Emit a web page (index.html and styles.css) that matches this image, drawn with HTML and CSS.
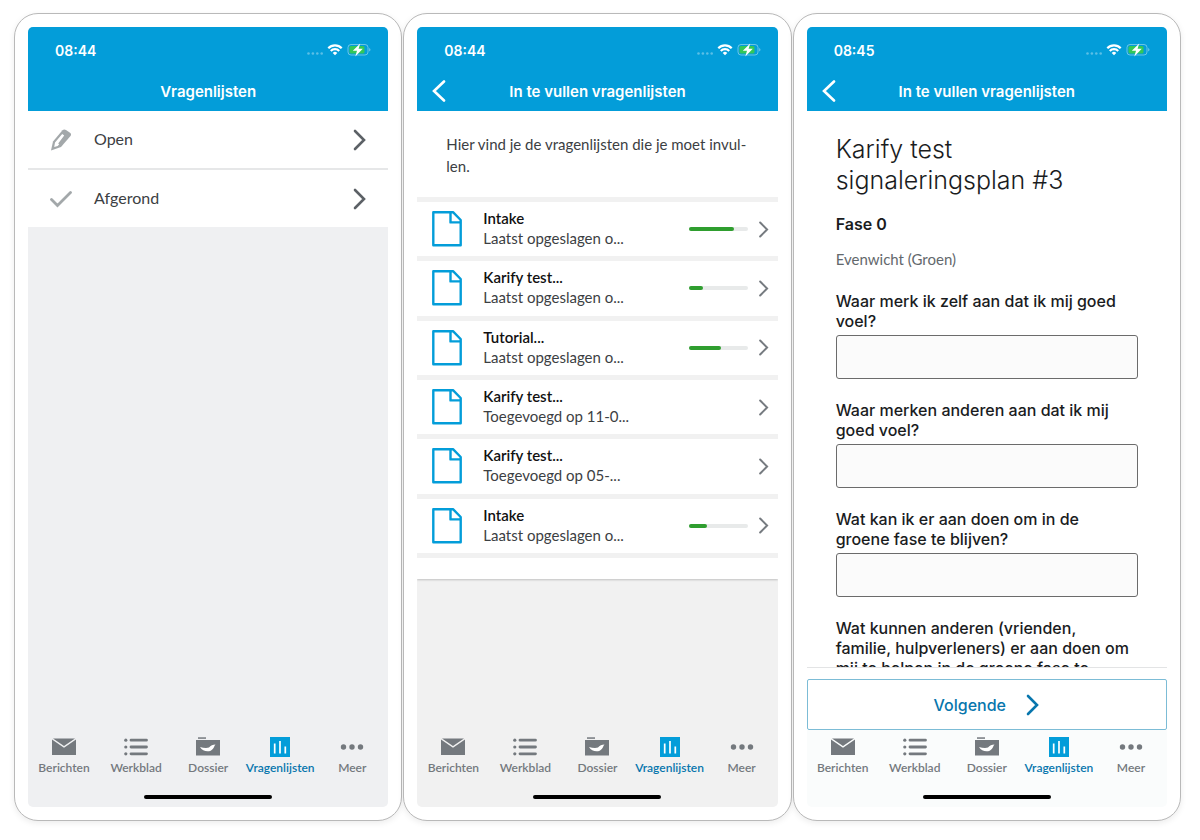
FILE: index.html
```html
<!DOCTYPE html>
<html lang="nl">
<head>
    <meta charset="utf-8">
    <title>Vragenlijsten</title>
    <link rel="stylesheet" href="styles.css">
</head>
<body>
    <!-- Shared icons -->
    <svg class="sprite" aria-hidden="true">
        <symbol id="status" viewBox="0 0 66 14">
            <g fill="#fff" opacity=".35">
                <circle cx="2.5" cy="10.5" r="1.3"/><circle cx="6.9" cy="10.5" r="1.3"/><circle cx="11.3" cy="10.5" r="1.3"/><circle cx="15.7" cy="10.5" r="1.3"/>
            </g>
            <g fill="none" stroke="#fff" stroke-width="2.2">
                <path d="M22.3 5.2a9.3 9.3 0 0 1 13.4 0"/>
                <path d="M24.8 8a5.8 5.8 0 0 1 8.4 0"/>
            </g>
            <path fill="#fff" d="M26.7 9.9a3.4 3.4 0 0 1 4.6 0L29 12.3z"/>
            <rect x="42" y="1.5" width="20" height="10.5" rx="3" fill="none" stroke="#fff" opacity=".4"/>
            <path d="M63.3 5v3.6a2 2 0 0 0 0-3.6z" fill="#fff" opacity=".5"/>
            <rect x="43.5" y="3" width="15" height="7.5" rx="1.6" fill="#34c759"/>
            <path d="M54.2.5 46.800 7.800h4.200l-1.700 5.700 7.500-7.700h-4.200z" fill="#fff"/>
        </symbol>
        <symbol id="next" viewBox="0 0 14 22">
            <path d="M2 2l9 9-9 9" fill="none" stroke="currentColor" stroke-width="2.6" stroke-linecap="round"/>
        </symbol>
        <symbol id="back" viewBox="0 0 14 22">
            <path d="M12 1.5 2 11l10 9.5" fill="none" stroke="currentColor" stroke-width="2.6" stroke-linecap="round"/>
        </symbol>
        <symbol id="doc" viewBox="0 0 30 36">
            <path d="M1.3 1.2h19.7l7.7 7.8v25.3H1.3zM18.5 1.2v10.2h10.2" fill="none" stroke="#039dd9" stroke-width="2.4" stroke-linejoin="round"/>
        </symbol>
        <symbol id="mail" viewBox="0 0 24 20">
            <path d="M0 2.4l12 8.400 12-8.400V18H0zM1 1.500h22L12 9z" fill="currentColor"/>
        </symbol>
        <symbol id="list" viewBox="0 0 24 20">
            <path d="M7 3.2h15.5M7 10h15.500M7 16.800h15.500" fill="none" stroke="currentColor" stroke-width="2.8" stroke-linecap="round"/>
            <g fill="currentColor"><circle cx="1.8" cy="3.2" r="1.6"/><circle cx="1.8" cy="10" r="1.6"/><circle cx="1.8" cy="16.8" r="1.6"/></g>
        </symbol>
        <symbol id="folder" viewBox="0 0 24 20">
            <path d="M2 .3h8v1.500H2z" fill="currentColor"/>
            <path d="M0 3h24v15.500H0z" fill="currentColor"/>
            <path d="M4 10c3 .8 6.500 1.300 9 .5 1.500-2 4-3 6.500-3-1.500 1.200-1 2.500-2.500 4.200-2.500 3.800-10 3.500-13-1.700z" fill="#fff"/>
        </symbol>
        <symbol id="chart" viewBox="0 0 20 20">
            <path d="M0 0h20v20H0z" fill="#039dd9"/>
            <path d="M4.7 6.5v10M10 4v12.5M15.3 9.5v7" stroke="#fff" stroke-width="1.7" fill="none"/>
        </symbol>
        <symbol id="more" viewBox="0 0 24 20">
            <g fill="currentColor"><circle cx="3.5" cy="10" r="2.7"/><circle cx="12" cy="10" r="2.7"/><circle cx="20.5" cy="10" r="2.7"/></g>
        </symbol>
    </svg>

    <main class="phones">
        <section class="phone">
            <div class="screen">
                <header class="header">
                    <div class="statusbar">
                        <span>08:44</span>
                        <svg class="status-icons"><use href="#status"/></svg>
                    </div>
                    <div class="titlebar">
                        <h1>Vragenlijsten</h1>
                    </div>
                </header>
                <div class="content">
                    <a href="#" class="menu-row">
                        <svg class="menu-icon" viewBox="0 0 22 22"><path d="M1 21.500 3 12.500 12.500 1.300q1.500-1.600 3.500-.3l4 2.800q1.800 1.400.5 3.200L11 18z" fill="#a3a8aa"/><path d="M5 13.500 12.200 5l2 1.500-6 8 1 .7-1.500 1.800-3.500 1z" fill="#fff"/></svg>
                        <span>Open</span>
                        <svg class="menu-arrow"><use href="#next"/></svg>
                    </a>
                    <a href="#" class="menu-row">
                        <svg class="menu-icon" viewBox="0 0 22 22"><path d="M1.5 11.500l6 6L20.500 4.500" fill="none" stroke="#a3a8aa" stroke-width="2.800" stroke-linecap="round"/></svg>
                        <span>Afgerond</span>
                        <svg class="menu-arrow"><use href="#next"/></svg>
                    </a>
                </div>
                <nav class="tabs">
                    <a href="#"><svg><use href="#mail"/></svg>Berichten</a>
                    <a href="#"><svg><use href="#list"/></svg>Werkblad</a>
                    <a href="#"><svg><use href="#folder"/></svg>Dossier</a>
                    <a href="#" class="active"><svg><use href="#chart"/></svg>Vragenlijsten</a>
                    <a href="#"><svg><use href="#more"/></svg>Meer</a>
                </nav>
                <div class="home-bar"></div>
            </div>
        </section>

        <section class="phone">
            <div class="screen screen-list">
                <header class="header">
                    <div class="statusbar">
                        <span>08:44</span>
                        <svg class="status-icons"><use href="#status"/></svg>
                    </div>
                    <div class="titlebar">
                        <button class="back" aria-label="Terug"><svg><use href="#back"/></svg></button>
                        <h1>In te vullen vragenlijsten</h1>
                    </div>
                </header>
                <div class="content">
                    <div class="card">
                        <p class="intro">Hier vind je de vragenlijsten die je moet invul-<br>len.</p>
                        <div class="list">
                            <a href="#" class="item">
                                <svg class="doc"><use href="#doc"/></svg>
                                <span class="item-text"><b>Intake</b>Laatst opgeslagen o...</span>
                                <span class="progress"><span style="width: 77%"></span></span>
                                <svg class="item-arrow"><use href="#next"/></svg>
                            </a>
                            <a href="#" class="item">
                                <svg class="doc"><use href="#doc"/></svg>
                                <span class="item-text"><b>Karify test...</b>Laatst opgeslagen o...</span>
                                <span class="progress"><span style="width: 25%"></span></span>
                                <svg class="item-arrow"><use href="#next"/></svg>
                            </a>
                            <a href="#" class="item">
                                <svg class="doc"><use href="#doc"/></svg>
                                <span class="item-text"><b>Tutorial...</b>Laatst opgeslagen o...</span>
                                <span class="progress"><span style="width: 55%"></span></span>
                                <svg class="item-arrow"><use href="#next"/></svg>
                            </a>
                            <a href="#" class="item">
                                <svg class="doc"><use href="#doc"/></svg>
                                <span class="item-text"><b>Karify test...</b>Toegevoegd op 11-0...</span>
                                <svg class="item-arrow"><use href="#next"/></svg>
                            </a>
                            <a href="#" class="item">
                                <svg class="doc"><use href="#doc"/></svg>
                                <span class="item-text"><b>Karify test...</b>Toegevoegd op 05-...</span>
                                <svg class="item-arrow"><use href="#next"/></svg>
                            </a>
                            <a href="#" class="item">
                                <svg class="doc"><use href="#doc"/></svg>
                                <span class="item-text"><b>Intake</b>Laatst opgeslagen o...</span>
                                <span class="progress"><span style="width: 31%"></span></span>
                                <svg class="item-arrow"><use href="#next"/></svg>
                            </a>
                        </div>
                    </div>
                </div>
                <nav class="tabs">
                    <a href="#"><svg><use href="#mail"/></svg>Berichten</a>
                    <a href="#"><svg><use href="#list"/></svg>Werkblad</a>
                    <a href="#"><svg><use href="#folder"/></svg>Dossier</a>
                    <a href="#" class="active"><svg><use href="#chart"/></svg>Vragenlijsten</a>
                    <a href="#"><svg><use href="#more"/></svg>Meer</a>
                </nav>
                <div class="home-bar"></div>
            </div>
        </section>

        <section class="phone">
            <div class="screen screen-form">
                <header class="header">
                    <div class="statusbar">
                        <span>08:45</span>
                        <svg class="status-icons"><use href="#status"/></svg>
                    </div>
                    <div class="titlebar">
                        <button class="back" aria-label="Terug"><svg><use href="#back"/></svg></button>
                        <h1>In te vullen vragenlijsten</h1>
                    </div>
                </header>
                <form class="content form">
                    <h2>Karify test<br>signaleringsplan #3</h2>
                    <h3>Fase 0</h3>
                    <p class="phase">Evenwicht (Groen)</p>
                    <label for="q1">Waar merk ik zelf aan dat ik mij goed<br>voel?</label>
                    <input type="text" id="q1">
                    <label for="q2">Waar merken anderen aan dat ik mij<br>goed voel?</label>
                    <input type="text" id="q2">
                    <label for="q3">Wat kan ik er aan doen om in de<br>groene fase te blijven?</label>
                    <input type="text" id="q3">
                    <label for="q4">Wat kunnen anderen (vrienden,<br>familie, hulpverleners) er aan doen om<br>mij te helpen in de groene fase te</label>
                    <input type="text" id="q4">
                </form>
                <div class="form-footer">
                    <button type="button" class="next-button">Volgende <svg><use href="#next"/></svg></button>
                </div>
                <nav class="tabs">
                    <a href="#"><svg><use href="#mail"/></svg>Berichten</a>
                    <a href="#"><svg><use href="#list"/></svg>Werkblad</a>
                    <a href="#"><svg><use href="#folder"/></svg>Dossier</a>
                    <a href="#" class="active"><svg><use href="#chart"/></svg>Vragenlijsten</a>
                    <a href="#"><svg><use href="#more"/></svg>Meer</a>
                </nav>
                <div class="home-bar"></div>
            </div>
        </section>
    </main>
</body>
</html>
```

FILE: styles.css
```css
* {
    box-sizing: border-box;
}
body {
    margin: 0;
    background-color: #fff;
    font-family: Lato, "Liberation Sans", sans-serif;
    color: #3c4043;
}
a {
    color: inherit;
    text-decoration: none;
}
h1, h2, h3, p {
    margin: 0;
}
.sprite {
    display: none;
}
.phones {
    display: flex;
    gap: 1px;
    height: 100vh;
    padding: 13px 19px 19px 14px;
}
.phone {
    flex: 1;
    min-width: 0;
    display: flex;
    padding: 13px;
    border: 1px solid #b9b9b9;
    border-radius: 24px;
    background-color: #fff;
    box-shadow: 0 2px 6px rgba(0,0,0,0.08);
}
.screen {
    flex: 1;
    min-width: 0;
    display: flex;
    flex-direction: column;
    border-radius: 5px;
    overflow: hidden;
    background-color: #eff0f2;
}
.screen-list {
    background-color: #f1f1f1;
}
.screen-form {
    background-color: #fafcfc;
}

/* Header */
.header {
    flex: none;
    background-color: #039dd9;
    color: #fff;
    font-family: Inter, sans-serif;
}
.statusbar {
    display: flex;
    align-items: center;
    justify-content: space-between;
    height: 44px;
    padding: 2px 16px 0 27px;
    font-size: 14px;
    font-weight: 600;
}
.status-icons {
    width: 66px;
    height: 14px;
}
.titlebar {
    position: relative;
    display: flex;
    align-items: center;
    justify-content: center;
    height: 40px;
}
.titlebar h1 {
    font-size: 15px;
    font-weight: 600;
}
.back {
    position: absolute;
    left: 15px;
    padding: 0;
    border: none;
    background: none;
    color: #fff;
    line-height: 0;
    cursor: pointer;
}
.back svg {
    width: 14px;
    height: 22px;
}
.content {
    flex: 1;
    min-height: 0;
    overflow: hidden;
}

/* Menu */
.menu-row {
    display: flex;
    align-items: center;
    height: 57px;
    padding: 0 21px 0 22px;
    background-color: #fff;
    font-size: 16px;
}
.menu-row + .menu-row {
    height: 59px;
    border-top: 2px solid #e6e7e8;
}
.menu-row span {
    flex: 1;
    margin-left: 22px;
    padding-bottom: 2px;
}
.menu-icon {
    width: 22px;
    height: 22px;
}
.menu-arrow {
    width: 14px;
    height: 22px;
    color: #5c6166;
}

/* Questionnaire list */
.card {
    padding-bottom: 21px;
    background-color: #fff;
    box-shadow: 0 1px 2px rgba(0,0,0,0.2);
}
.intro {
    padding: 22px 29px 20px;
    font-size: 15px;
    line-height: 22px;
}
.list {
    display: grid;
    grid-auto-rows: 1fr;
    min-height: 361px;
    border-top: 5px solid #f1f1f1;
}
.item {
    display: flex;
    align-items: center;
    padding: 0 8px 0 15px;
    border-bottom: 5px solid #f1f1f1;
}
.doc {
    width: 30px;
    height: 36px;
}
.item-text {
    flex: 1;
    margin-left: 21px;
    padding-bottom: 2px;
    font-size: 15px;
    line-height: 20px;
}
.item-text b {
    display: block;
    color: #111;
    font-weight: 600;
}
.progress {
    width: 59px;
    height: 4px;
    margin-right: 10px;
    border-radius: 2px;
    background-color: #e8eaea;
}
.progress span {
    display: block;
    height: 4px;
    border-radius: 2px;
    background-color: #2f9e2f;
}
.item-arrow {
    width: 12px;
    height: 17px;
    color: #767b80;
}

/* Form */
.form {
    padding: 23px 29px 0;
    background-color: #fff;
    color: #1a1c1e;
}
.form h2 {
    font-family: Inter, sans-serif;
    font-size: 25px;
    font-weight: 300;
    line-height: 31px;
}
.form h3 {
    margin-top: 18px;
    font-family: Inter, sans-serif;
    font-size: 16px;
    font-weight: 600;
    line-height: 20px;
}
.phase {
    margin: 15px 0 22px;
    color: #63686c;
    font-size: 15px;
    line-height: 20px;
}
.form label {
    display: block;
    font-family: Inter, sans-serif;
    font-size: 16px;
    font-weight: 500;
    line-height: 20px;
}
.form input {
    display: block;
    width: 100%;
    height: 44px;
    margin: 4px 0 21px;
    padding: 8px;
    border: 1px solid #6b6b6b;
    border-radius: 3px;
    background-color: #fbfbfb;
    font-size: 16px;
}
.form-footer {
    padding-top: 11px;
    border-top: 1px solid #e3e4e5;
    background-color: #fff;
}
.next-button {
    display: flex;
    align-items: center;
    justify-content: center;
    gap: 20px;
    width: 100%;
    height: 51px;
    border: 1px solid #7cbcd6;
    border-radius: 2px;
    background-color: #fff;
    color: #0876ad;
    font-family: Inter, sans-serif;
    font-size: 16px;
    font-weight: 500;
    cursor: pointer;
}
.next-button svg {
    width: 14px;
    height: 22px;
}

/* Bottom tabs */
.tabs {
    display: grid;
    grid-template-columns: repeat(5, 1fr);
    padding: 7px 0 17px;
    color: #74797e;
    font-size: 12px;
    font-weight: 600;
    line-height: 20px;
}
.tabs a {
    display: flex;
    flex-direction: column;
    align-items: center;
    gap: 1px;
}
.tabs svg {
    width: 24px;
    height: 20px;
}
.tabs .active {
    color: #0876ad;
}
.home-bar {
    align-self: center;
    flex: none;
    width: 128px;
    height: 4px;
    margin-bottom: 8px;
    border-radius: 2px;
    background-color: #000;
}
```
